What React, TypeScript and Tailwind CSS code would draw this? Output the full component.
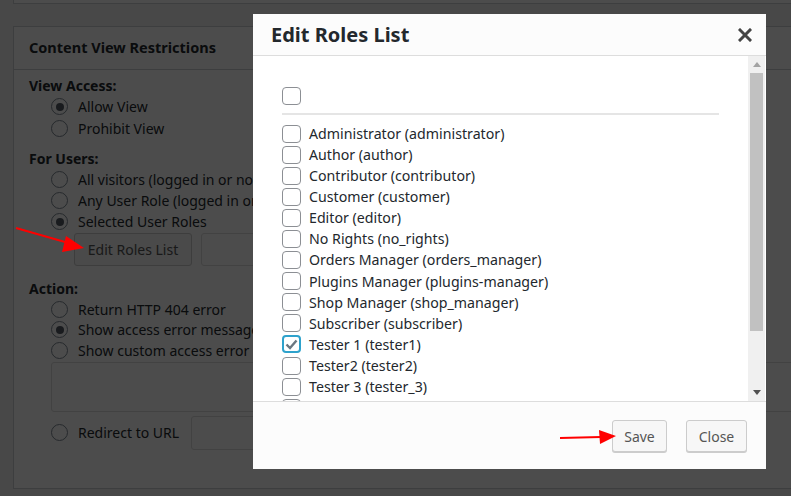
import React from 'react';

const font = { fontFamily: '"Noto Sans", "Open Sans", Arial, sans-serif' };

const roles = [
  'Administrator (administrator)',
  'Author (author)',
  'Contributor (contributor)',
  'Customer (customer)',
  'Editor (editor)',
  'No Rights (no_rights)',
  'Orders Manager (orders_manager)',
  'Plugins Manager (plugins-manager)',
  'Shop Manager (shop_manager)',
  'Subscriber (subscriber)',
  'Tester 1 (tester1)',
  'Tester2 (tester2)',
  'Tester 3 (tester_3)',
  '',
];

const Radio: React.FC<{ checked?: boolean; label: string; tight?: boolean }> = ({ checked, label, tight }) => (
  <div className={`flex items-center ${tight ? 'h-[20.5px]' : 'h-[21px]'}`}>
    <span className="w-[17px] h-[17px] rounded-full border border-[#7e8993] bg-white flex items-center justify-center shrink-0">
      {checked && <span className="w-[8px] h-[8px] rounded-full bg-[#555d66]" />}
    </span>
    <span className="ml-[10px] whitespace-nowrap">{label}</span>
  </div>
);

const Checkbox: React.FC<{ checked?: boolean }> = ({ checked }) => (
  <span
    className={`w-[19px] h-[18px] rounded-[4px] bg-white flex items-center justify-center shrink-0 ${
      checked ? 'border-2 border-[#2ea2cc]' : 'border border-[#8c8f94]'
    }`}
  >
    {checked && (
      <svg width="13" height="11" viewBox="0 0 13 11">
        <path d="M1.5 5.5 L5 9 L11.5 1.5" fill="none" stroke="#6b7780" strokeWidth="2.4" />
      </svg>
    )}
  </span>
);

export default function App() {
  return (
    <div className="relative w-[791px] h-[496px] overflow-hidden bg-[#f1f1f1] text-[14px] text-[#23282d]" style={font}>
      {/* page behind the dialog */}
      <div className="ml-[13px] w-[820px] h-[4px] border border-t-0 border-[#ccd0d4] bg-white" />
      <div className="ml-[13px] mt-[22px] w-[820px] h-[463px] border border-[#ccd0d4] bg-white">
        <div className="h-[43px] border-b border-[#ccd0d4] pl-[15px] flex items-center font-bold text-[14.5px]">
          Content View Restrictions
        </div>
        <div className="pl-[15px] pt-[5px]">
          <div className="font-bold h-[21px] leading-[21px]">View Access:</div>
          <div className="pl-[22px]">
            <Radio checked label="Allow View" />
            <div className="mt-[1px]"><Radio label="Prohibit View" /></div>
          </div>
          <div className="font-bold h-[21px] leading-[21px] mt-[9px]">For Users:</div>
          <div className="pl-[22px]">
            <Radio label="All visitors (logged in or not)" />
            <Radio label="Any User Role (logged in only)" />
            <Radio checked label="Selected User Roles" />
            <div className="flex items-center mt-[1px] pl-[23px] gap-[9px]">
              <div className="w-[118px] h-[33px] border border-[#ccc] rounded-[3px] bg-[#f7f7f7] flex items-center justify-center text-[#555]">
                Edit Roles List
              </div>
              <div className="w-[500px] h-[33px] border border-[#ddd] rounded-[3px] bg-white" />
            </div>
          </div>
          <div className="font-bold h-[21px] leading-[21px] mt-[12px]">Action:</div>
          <div className="pl-[22px]">
            <Radio tight label="Return HTTP 404 error" />
            <Radio tight checked label="Show access error message" />
            <Radio tight label="Show custom access error message" />
            <div className="mt-[1px] w-[760px] h-[50px] border border-[#ddd] rounded-[3px] bg-white" />
            <div className="flex items-center mt-[4px]">
              <Radio label="Redirect to URL" />
              <div className="ml-[12px] w-[560px] h-[34px] border border-[#ddd] rounded-[3px] bg-white" />
            </div>
          </div>
        </div>
      </div>

      {/* overlay */}
      <div className="absolute inset-0 bg-black/70" />

      {/* arrow on the page */}
      <svg className="absolute left-0 top-0" width="120" height="280">
        <line x1="16" y1="228" x2="72" y2="244" stroke="#ff0000" strokeWidth="2" />
        <polygon points="84,248 66,236 62,252" fill="#ff0000" />
      </svg>

      {/* dialog */}
      <div className="absolute left-[253px] top-[14px] w-[513px] h-[455px] bg-white flex flex-col">
        <div className="h-[42px] bg-[#fcfcfc] border-b border-[#dddddd] flex items-center justify-between pl-[18px] pr-[14px] shrink-0">
          <span className="text-[20px] font-bold text-[#23282d]">Edit Roles List</span>
          <svg width="14" height="14" viewBox="0 0 14 14">
            <path d="M2 2 L12 12 M12 2 L2 12" stroke="#444" strokeWidth="3" strokeLinecap="square" />
          </svg>
        </div>
        <div className="h-[345px] flex shrink-0 overflow-hidden">
          <div className="flex-1 pl-[29px] pt-[31px] overflow-hidden">
            <Checkbox />
            <div className="mt-[8px] w-[437px] border-t-2 border-[#e5e5e5]" />
            <div className="mt-[8px] text-[14.2px]">
              {roles.map((r, i) => (
                <div key={i} className="flex items-center h-[21.1px]">
                  <Checkbox checked={i === 10} />
                  {r && <span className="ml-[8px] whitespace-nowrap">{r}</span>}
                </div>
              ))}
            </div>
          </div>
          <div className="w-[17px] mr-[1px] bg-[#f0f0f0] flex flex-col items-center shrink-0">
            <div className="h-[17px] flex items-center justify-center">
              <svg width="8" height="5" viewBox="0 0 8 5"><polygon points="0,5 4,0 8,5" fill="#a3a3a3" /></svg>
            </div>
            <div className="w-[13px] h-[258px] bg-[#c1c1c1]" />
            <div className="flex-1" />
            <div className="h-[17px] flex items-center justify-center">
              <svg width="8" height="5" viewBox="0 0 8 5"><polygon points="0,0 8,0 4,5" fill="#505050" /></svg>
            </div>
          </div>
        </div>
        <div className="flex-1 bg-[#fcfcfc] border-t border-[#dddddd] flex items-start justify-end pt-[18px] pr-[19px] gap-[19px]">
          <div className="w-[55px] h-[32px] border border-[#ccc] rounded-[3px] bg-[#f7f7f7] shadow-[0_1px_0_#ccc] flex items-center justify-center text-[#555]">
            Save
          </div>
          <div className="w-[61px] h-[32px] border border-[#ccc] rounded-[3px] bg-[#f7f7f7] shadow-[0_1px_0_#ccc] flex items-center justify-center text-[#555]">
            Close
          </div>
        </div>
      </div>

      {/* arrow to save */}
      <svg className="absolute left-[555px] top-[425px]" width="70" height="25">
        <line x1="5" y1="13" x2="46" y2="12" stroke="#ff0000" strokeWidth="2" />
        <polygon points="61,11 44,5 45,19" fill="#ff0000" />
      </svg>
    </div>
  );
}
